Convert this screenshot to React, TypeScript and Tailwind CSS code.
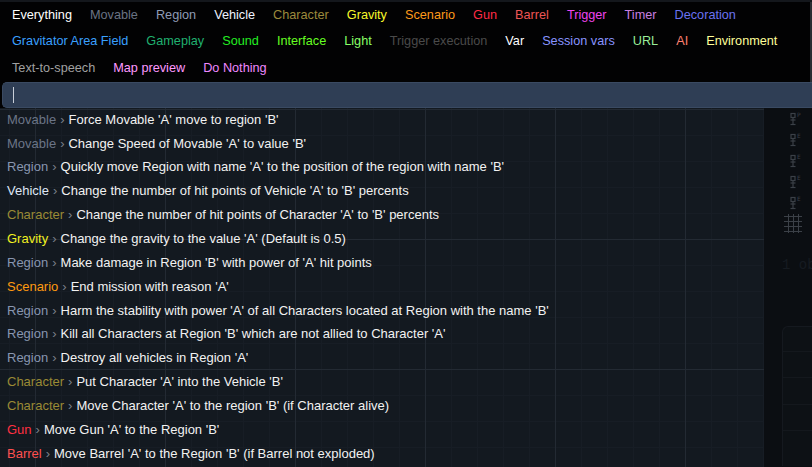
import React from "react";

type Tab = { t: string; c: string };

const rows: Tab[][] = [
  [
    { t: "Everything", c: "text-[#ffffff]" },
    { t: "Movable", c: "text-[#6a7383]" },
    { t: "Region", c: "text-[#8e9bb5]" },
    { t: "Vehicle", c: "text-[#eef4ff]" },
    { t: "Character", c: "text-[#9c8a3c]" },
    { t: "Gravity", c: "text-[#f8f82a]" },
    { t: "Scenario", c: "text-[#ff9a1a]" },
    { t: "Gun", c: "text-[#ff2a45]" },
    { t: "Barrel", c: "text-[#ee5555]" },
    { t: "Trigger", c: "text-[#ee44ee]" },
    { t: "Timer", c: "text-[#c77fe0]" },
    { t: "Decoration", c: "text-[#6a72f2]" },
  ],
  [
    { t: "Gravitator Area Field", c: "text-[#3aa0ff]" },
    { t: "Gameplay", c: "text-[#20b070]" },
    { t: "Sound", c: "text-[#22ee22]" },
    { t: "Interface", c: "text-[#66ff22]" },
    { t: "Light", c: "text-[#88ff66]" },
    { t: "Trigger execution", c: "text-[#4a4a4a]" },
    { t: "Var", c: "text-[#ffffff]" },
    { t: "Session vars", c: "text-[#8894ff]" },
    { t: "URL", c: "text-[#99ee99]" },
    { t: "AI", c: "text-[#ff8070]" },
    { t: "Environment", c: "text-[#ffff99]" },
  ],
  [
    { t: "Text-to-speech", c: "text-[#a0a0a0]" },
    { t: "Map preview", c: "text-[#ff99ff]" },
    { t: "Do Nothing", c: "text-[#ee88ff]" },
  ],
];

const items: { l: string; c: string; t: string }[] = [
  { l: "Movable", c: "text-[#6b7587]", t: "Force Movable 'A' move to region 'B'" },
  { l: "Movable", c: "text-[#6b7587]", t: "Change Speed of Movable 'A' to value 'B'" },
  { l: "Region", c: "text-[#8896b0]", t: "Quickly move Region with name 'A' to the position of the region with name 'B'" },
  { l: "Vehicle", c: "text-[#dfe6f5]", t: "Change the number of hit points of Vehicle 'A' to 'B' percents" },
  { l: "Character", c: "text-[#9a8a35]", t: "Change the number of hit points of Character 'A' to 'B' percents" },
  { l: "Gravity", c: "text-[#f0f020]", t: "Change the gravity to the value 'A' (Default is 0.5)" },
  { l: "Region", c: "text-[#8896b0]", t: "Make damage in Region 'B' with power of 'A' hit points" },
  { l: "Scenario", c: "text-[#ff9a10]", t: "End mission with reason 'A'" },
  { l: "Region", c: "text-[#8896b0]", t: "Harm the stability with power 'A' of all Characters located at Region with the name 'B'" },
  { l: "Region", c: "text-[#8896b0]", t: "Kill all Characters at Region 'B' which are not allied to Character 'A'" },
  { l: "Region", c: "text-[#8896b0]", t: "Destroy all vehicles in Region 'A'" },
  { l: "Character", c: "text-[#9a8a35]", t: "Put Character 'A' into the Vehicle 'B'" },
  { l: "Character", c: "text-[#9a8a35]", t: "Move Character 'A' to the region 'B' (if Character alive)" },
  { l: "Gun", c: "text-[#ff3040]", t: "Move Gun 'A' to the Region 'B'" },
  { l: "Barrel", c: "text-[#ff5050]", t: "Move Barrel 'A' to the Region 'B' (if Barrel not exploded)" },
];

function Person({ letter }: { letter: string }) {
  return (
    <svg width="16" height="16" viewBox="0 0 16 16" className="block">
      <g fill="none" stroke="#3b4047" strokeWidth="1.2">
        <rect x="3" y="2.5" width="4" height="4" />
        <line x1="5" y1="6.5" x2="5" y2="13" />
        <line x1="2.5" y1="9" x2="7.5" y2="9" />
        <line x1="2.5" y1="13.5" x2="7.5" y2="13.5" />
      </g>
      <text x="9" y="6" fontSize="6" fill="#3b4047" fontFamily="DejaVu Sans Mono, monospace">
        {letter}
      </text>
    </svg>
  );
}

function GridIcon() {
  return (
    <svg width="20" height="20" viewBox="0 0 20 20" className="block">
      <g stroke="#3b4047" strokeWidth="1">
        <line x1="1" y1="3.5" x2="19" y2="3.5" />
        <line x1="1" y1="8.5" x2="19" y2="8.5" />
        <line x1="1" y1="13.5" x2="19" y2="13.5" />
        <line x1="1" y1="18.5" x2="19" y2="18.5" />
        <line x1="5.5" y1="1" x2="5.5" y2="20" />
        <line x1="10.5" y1="1" x2="10.5" y2="20" />
        <line x1="15.5" y1="1" x2="15.5" y2="20" />
      </g>
    </svg>
  );
}

function Grid() {
  return (
    <svg className="absolute inset-0 w-full h-full" xmlns="http://www.w3.org/2000/svg">
      <defs>
        <pattern id="minor" width="26" height="26" patternUnits="userSpaceOnUse" x="9" y="1">
          <path d="M0.5 0 V26 M0 0.5 H26" stroke="#171d25" strokeWidth="1" fill="none" />
        </pattern>
        <pattern id="major" width="130" height="130" patternUnits="userSpaceOnUse" x="35" y="1">
          <path d="M0.5 0 V130 M0 0.5 H130" stroke="#232a33" strokeWidth="1" fill="none" />
        </pattern>
      </defs>
      <rect width="100%" height="100%" fill="#131920" />
      <rect width="100%" height="100%" fill="url(#minor)" />
      <rect width="100%" height="100%" fill="url(#major)" />
    </svg>
  );
}

export default function App() {
  return (
    <div
      className="w-[812px] h-[467px] overflow-hidden bg-[#14171c] flex flex-col text-[12.7px]"
      style={{ fontFamily: '"Liberation Sans", Arial, sans-serif' }}
    >
      {/* top filter panel */}
      <div className="mt-[2px] bg-[#020203] flex flex-col shrink-0 border-r-[2px] border-[#2a2d33]">
        {rows.map((r, i) => (
          <div key={i} className="h-[26.5px] flex items-center pl-[12px] gap-x-[18px] whitespace-nowrap">
            {r.map((tab) => (
              <span key={tab.t} className={tab.c}>
                {tab.t}
              </span>
            ))}
          </div>
        ))}
      </div>
      <div className="bg-[#020203] pl-[2px] shrink-0">
        <div className="h-[26px] bg-[#2f3e55] rounded-l-[5px] border border-[#3a4a62] border-r-0 flex items-center pl-[10px]">
          <div className="w-[1px] h-[16px] bg-[#c8ced8]" />
        </div>
      </div>

      {/* canvas + right panel */}
      <div className="flex flex-1 min-h-0">
        <div className="relative w-[764px] shrink-0 h-full">
          <Grid />
          <div className="relative flex flex-col text-[13px]">
            {items.map((it, i) => (
              <div key={i} className="h-[23.86px] flex items-center pl-[7px] whitespace-nowrap">
                <span className={it.c}>{it.l}</span>
                <span className="text-[#7a808a] mx-[4px]">›</span>
                <span className="text-[#f2f2f2]">{it.t}</span>
              </div>
            ))}
          </div>
        </div>
        <div className="flex-1 min-w-0 overflow-hidden bg-[#0b0e12] flex flex-col pl-[22px] pt-[3px]">
          <div className="flex flex-col gap-[5px] pl-[2px]">
            <Person letter="P" />
            <Person letter="E" />
            <Person letter="E" />
            <Person letter="E" />
            <Person letter="E" />
          </div>
          <div className="mt-[2px] -ml-[3px]">
            <GridIcon />
          </div>
          <div
            className="mt-[22px] -ml-[4px] text-[14px] text-[#161b21] whitespace-nowrap"
            style={{ fontFamily: '"Liberation Mono", monospace' }}
          >
            1 obj
          </div>
          <div className="mt-[50px] -ml-[4px] h-[140px] rounded-tl-[6px] border-l border-t border-[#15191f] bg-[#0d1115] flex flex-col">
            <div className="h-[25px] border-b border-[#14181d]" />
            <div className="h-[26px] border-b border-[#14181d]" />
            <div className="h-[27px] border-b border-[#14181d]" />
            <div className="h-[26px] border-b border-[#14181d]" />
          </div>
        </div>
      </div>
    </div>
  );
}
